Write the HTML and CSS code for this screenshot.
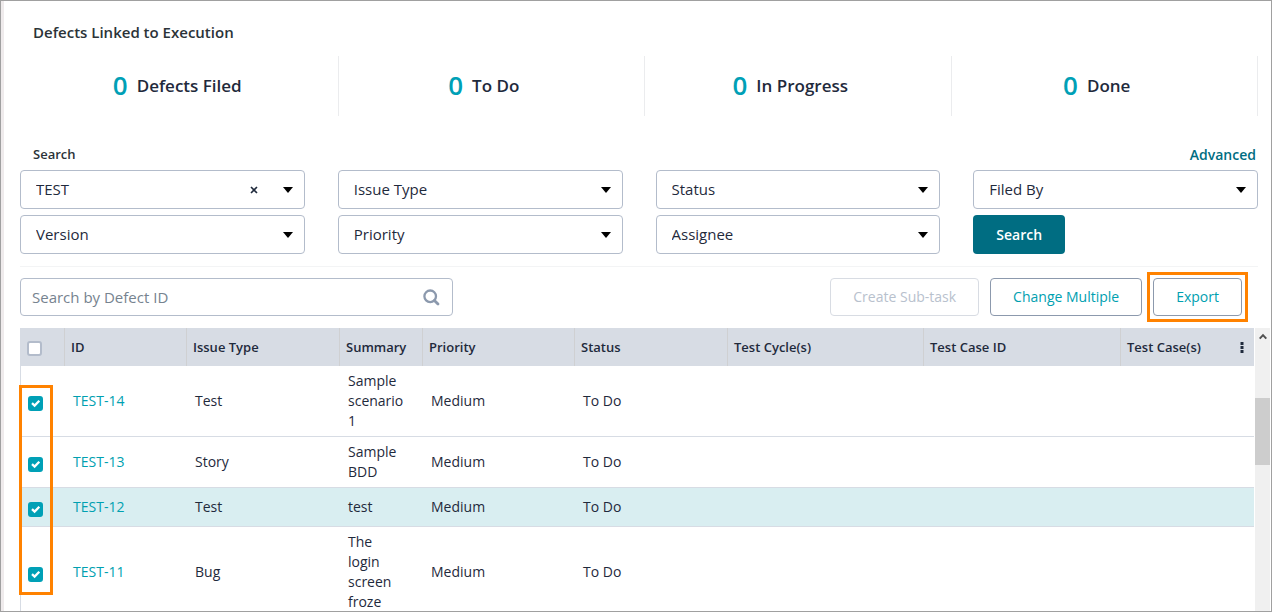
FILE: index.html
```html
<!DOCTYPE html>
<html lang="en">
<head>
<meta charset="utf-8">
<title>Defects Linked to Execution</title>
<link rel="stylesheet" href="styles.css">
</head>
<body>
<main class="panel">
  <h1 class="title">Defects Linked to Execution</h1>
  <section class="stats" aria-label="Defect totals">
    <div class="stat"><strong class="stat-count">0</strong><span>Defects Filed</span></div>
    <div class="stat"><strong class="stat-count">0</strong><span>To Do</span></div>
    <div class="stat"><strong class="stat-count">0</strong><span>In Progress</span></div>
    <div class="stat"><strong class="stat-count">0</strong><span>Done</span></div>
  </section>

  <div class="search-head">
    <h2 class="search-label">Search</h2>
    <a class="advanced" href="#">Advanced</a>
  </div>
  <form class="filters">
    <div class="field">
      <select class="select" aria-label="Project"><option>TEST</option></select>
      <button class="clear" type="button" aria-label="Clear project"><svg width="8" height="8" viewBox="0 0 8 8"><path d="M1 1l6 6M7 1L1 7" stroke="#1f2a3c" stroke-width="1.6"/></svg></button>
      <svg class="caret" width="10" height="6" viewBox="0 0 10 6"><path d="M0 0h10L5 6z"/></svg>
    </div>
    <div class="field">
      <select class="select" aria-label="Issue Type"><option>Issue Type</option></select>
      <svg class="caret" width="10" height="6" viewBox="0 0 10 6"><path d="M0 0h10L5 6z"/></svg>
    </div>
    <div class="field">
      <select class="select" aria-label="Status"><option>Status</option></select>
      <svg class="caret" width="10" height="6" viewBox="0 0 10 6"><path d="M0 0h10L5 6z"/></svg>
    </div>
    <div class="field">
      <select class="select" aria-label="Filed By"><option>Filed By</option></select>
      <svg class="caret" width="10" height="6" viewBox="0 0 10 6"><path d="M0 0h10L5 6z"/></svg>
    </div>
    <div class="field">
      <select class="select" aria-label="Version"><option>Version</option></select>
      <svg class="caret" width="10" height="6" viewBox="0 0 10 6"><path d="M0 0h10L5 6z"/></svg>
    </div>
    <div class="field">
      <select class="select" aria-label="Priority"><option>Priority</option></select>
      <svg class="caret" width="10" height="6" viewBox="0 0 10 6"><path d="M0 0h10L5 6z"/></svg>
    </div>
    <div class="field">
      <select class="select" aria-label="Assignee"><option>Assignee</option></select>
      <svg class="caret" width="10" height="6" viewBox="0 0 10 6"><path d="M0 0h10L5 6z"/></svg>
    </div>
    <button class="search-button" type="button">Search</button>
  </form>

  <div class="toolbar">
    <div class="lookup">
      <input class="lookup-input" type="text" placeholder="Search by Defect ID" aria-label="Search by Defect ID">
      <svg class="lookup-icon" width="17" height="17" viewBox="0 0 17 17" fill="none" stroke="#8c99ad"><circle cx="7.2" cy="7.3" r="5.8" stroke-width="2.3"/><path d="M11.4 11.4l3.6 3.6" stroke-width="2.8" stroke-linecap="round"/></svg>
    </div>
    <div class="actions">
      <button class="action" type="button" disabled>Create Sub-task</button>
      <button class="action" type="button">Change Multiple</button>
      <span class="callout"><button class="action" type="button">Export</button></span>
    </div>
  </div>

  <div class="results">
    <div class="table-area">
      <table class="grid">
        <colgroup><col class="c-check"><col class="c-id"><col class="c-type"><col class="c-summary"><col class="c-priority"><col class="c-status"><col class="c-cycle"><col class="c-caseid"><col class="c-cases"></colgroup>
        <thead>
          <tr>
            <th class="check"><input class="box" type="checkbox" aria-label="Select all"></th>
            <th>ID</th><th>Issue Type</th><th>Summary</th><th>Priority</th><th>Status</th><th>Test Cycle(s)</th><th>Test Case ID</th>
            <th><div class="last-head">Test Case(s)<button class="more" type="button" aria-label="Columns"><svg width="4" height="11" viewBox="0 0 4 11"><path d="M0.5 0h3v3h-3zM0.5 4h3v3h-3zM0.5 8h3v3h-3z" fill="#1f2a3c"/></svg></button></div></th>
          </tr>
        </thead>
        <tbody>
          <tr><td class="check"><input class="box" type="checkbox" checked aria-label="Select TEST-14"></td><td><a href="#">TEST-14</a></td><td>Test</td><td class="summary">Sample scenario 1</td><td>Medium</td><td>To Do</td><td></td><td></td><td></td></tr>
          <tr><td class="check"><input class="box" type="checkbox" checked aria-label="Select TEST-13"></td><td><a href="#">TEST-13</a></td><td>Story</td><td class="summary">Sample BDD</td><td>Medium</td><td>To Do</td><td></td><td></td><td></td></tr>
          <tr class="active"><td class="check"><input class="box" type="checkbox" checked aria-label="Select TEST-12"></td><td><a href="#">TEST-12</a></td><td>Test</td><td class="summary">test</td><td>Medium</td><td>To Do</td><td></td><td></td><td></td></tr>
          <tr><td class="check"><input class="box" type="checkbox" checked aria-label="Select TEST-11"></td><td><a href="#">TEST-11</a></td><td>Bug</td><td class="summary">The login screen froze</td><td>Medium</td><td>To Do</td><td></td><td></td><td></td></tr>
        </tbody>
      </table>
      <div class="check-callout"></div>
    </div>
    <div class="scrollbar" aria-hidden="true">
      <svg class="scroll-up" width="8" height="7" viewBox="0 0 8 7"><path d="M.7 5.6L4 2.1l3.3 3.5" fill="none" stroke="#505050" stroke-width="2"/></svg>
      <div class="thumb"></div>
    </div>
  </div>
</main>
</body>
</html>
```
FILE: styles.css
```css
* { box-sizing: border-box; }

body {
  margin: 0;
  font-family: "Open Sans", sans-serif;
  font-size: 14px;
  line-height: 20px;
  color: #1f2a3c;
}

button, select, input { font: inherit; color: inherit; margin: 0; }
button { cursor: pointer; }
a { text-decoration: none; }

.panel {
  display: flex;
  flex-direction: column;
  height: 100vh;
  overflow: hidden;
  border: 1px solid #a0a0a0;
  background: linear-gradient(to right, #efebec 3px, #fff 3px);
  padding: 21px 0 0 19px;
}

.title {
  margin: 0 0 14px 13px;
  font-size: 15px;
  line-height: 20px;
  font-weight: 600;
  color: #2b3338;
}

.stats {
  display: grid;
  grid-template-columns: repeat(4, 1fr);
  margin: 0 13px 28px 12px;
}
.stat {
  display: flex;
  align-items: center;
  justify-content: center;
  gap: 9px;
  height: 60px;
  padding-right: 15px;
  border-right: 1px solid #ebecee;
  font-size: 17px;
  font-weight: 600;
}
.stat-count { padding-bottom: 2px; font-size: 26px; font-weight: 600; color: #00a0b6; }

.search-head {
  display: flex;
  justify-content: space-between;
  align-items: flex-start;
  margin: 0 15px 5px 13px;
}
.search-label { margin: 0; font-size: 13px; line-height: 20px; font-weight: 600; color: #2b3338; }
.advanced { padding-top: 1px; font-weight: 600; color: #006d82; }

.filters {
  display: grid;
  grid-template-columns: repeat(4, 1fr);
  gap: 6px 33px;
  margin-right: 13px;
  padding-bottom: 12px;
  border-bottom: 1px solid #f3f4f5;
}
.field, .lookup { display: grid; align-items: center; }
.field > *, .lookup > * { grid-area: 1 / 1; }
.select {
  appearance: none;
  width: 100%;
  height: 39px;
  padding: 0 15px 2px;
  border: 1px solid #b3bccb;
  border-radius: 4px;
  background: #fff;
  font-size: 15px;
}
.caret { justify-self: end; margin-right: 12px; pointer-events: none; }
.clear {
  display: flex;
  justify-self: end;
  margin-right: 47px;
  padding: 0;
  border: 0;
  background: none;
}
.search-button {
  justify-self: start;
  height: 39px;
  padding: 0 23px;
  border: 0;
  border-radius: 4px;
  background: #006d82;
  color: #fff;
  font-weight: 600;
}

.toolbar {
  display: flex;
  justify-content: space-between;
  margin: 11px 29px 12px 0;
}
.lookup { flex: 0 1 433px; }
.lookup-input {
  width: 100%;
  height: 38px;
  padding: 0 40px 0 11px;
  border: 1px solid #b3bccb;
  border-radius: 4px;
  font-size: 15px;
}
.lookup-input::placeholder { color: #76838f; opacity: 1; }
.lookup-icon { justify-self: end; margin-right: 13px; }
.actions { display: flex; gap: 11px; }
.action {
  height: 38px;
  padding: 0 22px;
  border: 1px solid #8c99ad;
  border-radius: 4px;
  background: #fff;
  color: #00a0b0;
}
.action:disabled { border-color: #d8dce3; color: #b8c1cd; cursor: default; }
.callout { outline: 3px solid #ff8200; outline-offset: 3px; }

.results { display: flex; flex: 1; gap: 1px; min-height: 0; }
.table-area { position: relative; flex: 1; min-width: 0; }
.grid {
  width: 100%;
  table-layout: fixed;
  border-collapse: separate;
  border-spacing: 0;
}
.c-check { width: 44px; }
.c-id { width: 122px; }
.c-type { width: 153px; }
.c-summary { width: 83px; }
.c-priority { width: 152px; }
.c-status { width: 153px; }
.c-cycle { width: 196px; }
.c-caseid { width: 197px; }
.c-cases { width: 134px; }
th {
  height: 38px;
  padding: 0 6px;
  border-left: 1px solid #cfd0d2;
  background: #d7dce4;
  font-size: 13px;
  font-weight: 600;
  text-align: left;
  white-space: nowrap;
}
td {
  height: 39px;
  padding: 5px 9px;
  border-bottom: 1px solid #d7dce4;
}
td a { color: #00a0b0; }
.summary { padding-right: 16px; }
th.check { padding: 3px 0 0 6px; border-left-color: #d7dce4; }
td.check { padding: 5px 0 0 7px; border-left: 1px solid #d7dce4; }
.active { background: #d9eef1; }
.box {
  appearance: none;
  display: block;
  width: 15px;
  height: 15px;
  border: 2px solid #b3bccb;
  border-radius: 3px;
  background: #fff;
}
.box:checked {
  border-color: #00a0b6;
  background: #00a0b6 url("data:image/svg+xml,%3Csvg xmlns='http://www.w3.org/2000/svg' viewBox='0 0 11 11'%3E%3Cpath d='M2 5.2l2.6 2.4L9.3 2.8' fill='none' stroke='white' stroke-width='2.3'/%3E%3C/svg%3E") center / 11px no-repeat;
}
.last-head { display: flex; align-items: center; justify-content: space-between; }
.more { display: flex; padding: 0 4px; border: 0; background: none; }

.check-callout {
  position: absolute;
  top: 57px;
  left: -1px;
  width: 34px;
  height: 210px;
  border: 3px solid #ff8200;
  pointer-events: none;
}

.scrollbar { width: 16px; background: linear-gradient(to right, #f0f0f0 15px, #fff 15px); }
.scroll-up { display: block; margin: 5px 0 58px 4px; }
.thumb { width: 15px; height: 67px; background: #cdcdcd; }
```
